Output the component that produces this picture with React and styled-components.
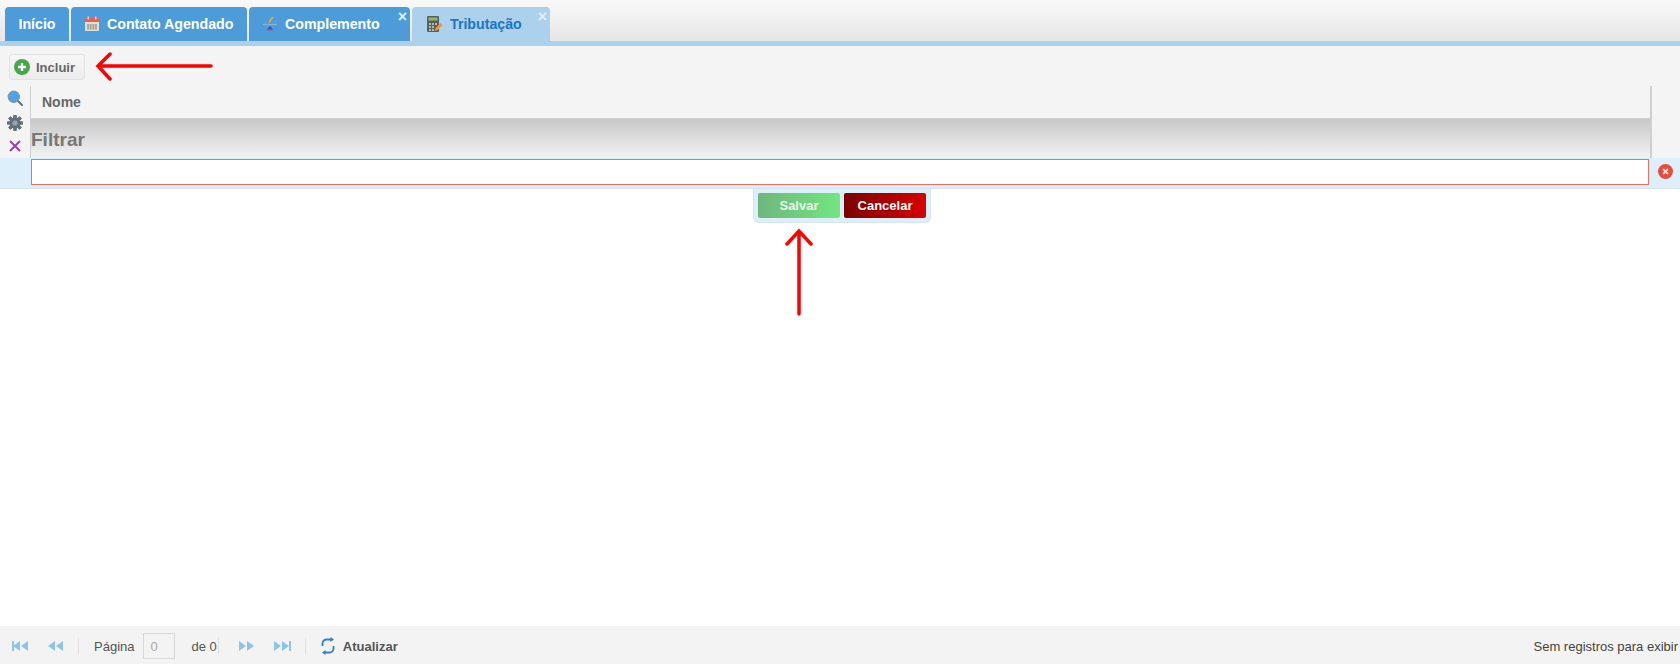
import React from 'react';
import styled, { createGlobalStyle } from "styled-components";

const GlobalStyle = createGlobalStyle`
    html, body {
        margin: 0;
        padding: 0;
        background: #fff;
        font-family: "Liberation Sans", Arial, sans-serif;
    }
`

function CalendarIcon() {
    return (
        <svg width="16" height="16" viewBox="0 0 16 16">
            <rect x="1" y="2" width="14" height="13" rx="1" fill="#e4dfd5" />
            <path d="M1 3a1 1 0 0 1 1-1h12a1 1 0 0 1 1 1v3H1z" fill="#e8604c" />
            <rect x="3.5" y="0.5" width="1.5" height="3" fill="#d4d4d4" />
            <rect x="11" y="0.5" width="1.5" height="3" fill="#d4d4d4" />
            <rect x="3" y="8" width="10" height="5.5" fill="#a9a9a2" />
            <path d="M5.5 8v5.5M8 8v5.5M10.5 8v5.5" stroke="#d8d4cc" strokeWidth="0.7" />
        </svg>
    );
}

function ScaleIcon() {
    return (
        <svg width="16" height="16" viewBox="0 0 16 16">
            <path d="M9 1.5L12 .8 8.5 6 6 7z" fill="#eba341" />
            <path d="M1 8.5h14" stroke="#86b1d8" strokeWidth="1.4" />
            <path d="M8 10l3 3.5H5z" fill="#3e50a8" />
            <rect x="5" y="14" width="6" height="1" fill="#6d7ac0" />
        </svg>
    );
}

function CalcIcon() {
    return (
        <svg width="18" height="18" viewBox="0 0 18 18">
            <rect x="2" y="1" width="12" height="16" rx="1" fill="#5c5f58" />
            <rect x="3.5" y="2.5" width="9" height="3" fill="#7fbf6f" />
            <path d="M4 8h2v2H4zM7 8h2v2H7zM10 8h2v2h-2zM4 11h2v2H4zM7 11h2v2H7zM4 14h2v2H4zM7 14h2v2H7z" fill="#b8b8b0" />
            <path d="M10 16l.6-3 5-5 2 2-5 5z" fill="#ee9a33" />
        </svg>
    );
}

function PlusIcon() {
    return (
        <svg width="16" height="16" viewBox="0 0 16 16">
            <circle cx="8" cy="8" r="8" fill="#43a848" />
            <path d="M8 4v8M4 8h8" stroke="#fff" strokeWidth="2.3" />
        </svg>
    );
}

function SearchIcon() {
    return (
        <svg width="16" height="16" viewBox="0 0 16 16">
            <path d="M10.5 10.5L15 15" stroke="#6b6b6b" strokeWidth="2" strokeLinecap="round" />
            <circle cx="6.8" cy="6.8" r="5.6" fill="#4da3e8" stroke="#7d99ad" strokeWidth="1.2" />
        </svg>
    );
}

function GearIcon() {
    const teeth = [0, 45, 90, 135, 180, 225, 270, 315];
    return (
        <svg width="16" height="16" viewBox="0 0 15 15">
            {teeth.map((deg) => (
                <rect key={deg} x="6" y="0" width="3" height="15" rx="0.6" fill="#63717c" transform={`rotate(${deg} 7.5 7.5)`} />
            ))}
            <circle cx="7.5" cy="7.5" r="5.3" fill="#63717c" />
            <circle cx="7.5" cy="7.5" r="2.4" fill="#9aa5ad" />
        </svg>
    );
}

function CrossIcon() {
    return (
        <svg width="12" height="12" viewBox="0 0 12 12">
            <path d="M1 1l10 10M11 1L1 11" stroke="#9c3fb5" strokeWidth="2" />
        </svg>
    );
}

function ErrorIcon() {
    return (
        <svg width="15" height="15" viewBox="0 0 15 15">
            <circle cx="7.5" cy="7.5" r="7.5" fill="#e84c3d" />
            <path d="M5 5l5 5M10 5l-5 5" stroke="#f6dcd8" strokeWidth="1.8" />
        </svg>
    );
}

function PagerIcon({ dir, end }) {
    const d = dir === "left"
        ? "M8 1v10L1 6zM16 1v10L9 6z"
        : "M0 1v10l7-5zM8 1v10l7-5z";
    return (
        <svg width="17" height="12" viewBox="0 0 17 12">
            <path d={d} fill="#8fc4ea" />
            {end && <rect x={dir === "left" ? 0 : 15} y="1" width="2" height="10" fill="#8fc4ea" />}
        </svg>
    );
}

function RefreshIcon() {
    return (
        <svg width="14" height="18" viewBox="0 0 14 18" fill="none">
            <path d="M1.5 9V6.5a4 4 0 0 1 4-4H10" stroke="#2f7fc8" strokeWidth="1.8" />
            <path d="M9.5 0l3.5 2.5L9.5 5z" fill="#2f7fc8" />
            <path d="M12.5 9v2.5a4 4 0 0 1-4 4H4" stroke="#2f7fc8" strokeWidth="1.8" />
            <path d="M4.5 13L1 15.5 4.5 18z" fill="#2f7fc8" />
        </svg>
    );
}

function App() {
    return (
        <Page>
            <GlobalStyle />
            <TabBar>
                <Tab $width={64} $center><span>Início</span></Tab>
                <Tab $width={176}><CalendarIcon /><span>Contato Agendado</span></Tab>
                <Tab $width={161}><ScaleIcon /><span>Complemento</span><Close>×</Close></Tab>
                <Tab $width={138} $active><CalcIcon /><span>Tributação</span><Close>×</Close></Tab>
            </TabBar>
            <Toolbar>
                <AddButton><PlusIcon />Incluir</AddButton>
            </Toolbar>
            <GridArea>
                <SideTools>
                    <SearchIcon />
                    <GearIcon />
                    <CrossIcon />
                </SideTools>
                <GridMain>
                    <HeaderCell>Nome</HeaderCell>
                    <FilterTitle>Filtrar</FilterTitle>
                </GridMain>
            </GridArea>
            <EditRow>
                <EditInput />
                <ErrorSlot><ErrorIcon /></ErrorSlot>
            </EditRow>
            <ActionsWrap>
                <Actions>
                    <SaveButton>Salvar</SaveButton>
                    <CancelButton>Cancelar</CancelButton>
                </Actions>
            </ActionsWrap>
            <Spacer />
            <Pager>
                <PagerButton $width={35}><PagerIcon dir="left" end /></PagerButton>
                <PagerButton $width={31}><PagerIcon dir="left" /></PagerButton>
                <Divider />
                <PagerText>Página</PagerText>
                <PageInput value="0" readOnly />
                <PagerText>de 0</PagerText>
                <Divider $wide />
                <PagerButton $width={35}><PagerIcon dir="right" /></PagerButton>
                <PagerButton $width={31}><PagerIcon dir="right" end /></PagerButton>
                <Divider />
                <Refresh><RefreshIcon />Atualizar</Refresh>
                <Status>Sem registros para exibir</Status>
            </Pager>
            <ArrowLeft viewBox="0 0 120 30">
                <path d="M117 14H4M16 2L4 14l12 13" fill="none" stroke="#f00" strokeWidth="3.5" strokeLinecap="round" />
            </ArrowLeft>
            <ArrowUp viewBox="0 0 30 90">
                <path d="M15 87V4M3 17L15 4l12 13" fill="none" stroke="#f00" strokeWidth="3.5" strokeLinecap="round" />
            </ArrowUp>
        </Page>
    )
};


const Page = styled.div`
    position: relative;
    display: flex;
    flex-direction: column;
    height: 664px;
    overflow: hidden;
    background: #fff;
`

const TabBar = styled.div`
    display: flex;
    align-items: flex-end;
    gap: 2px;
    height: 41px;
    padding-left: 5px;
    box-sizing: border-box;
    background: linear-gradient(#f9f9f9, #e6e6e6);
`

const Tab = styled.div`
    position: relative;
    display: flex;
    align-items: center;
    justify-content: ${(p) => (p.$center ? "center" : "flex-start")};
    gap: 7px;
    width: ${(p) => p.$width}px;
    height: 34px;
    padding-left: ${(p) => (p.$center ? 0 : 13)}px;
    box-sizing: border-box;
    border-radius: 4px 4px 0 0;
    background: ${(p) => (p.$active ? "#acd1ed" : "#4d9cd9")};
    color: ${(p) => (p.$active ? "#1a76c4" : "#fff")};
    font-size: 14.2px;
    font-weight: 700;
`

const Close = styled.b`
    position: absolute;
    top: 1px;
    right: 3px;
    color: #e4eef6;
    font-size: 16px;
    line-height: 17px;
    font-weight: 700;
`

const Toolbar = styled.div`
    flex: none;
    height: 45px;
    padding: 8px 0 0 9px;
    box-sizing: border-box;
    background: #f4f4f4;
    border-top: 5px solid #acd1ed;
`

const AddButton = styled.div`
    display: flex;
    align-items: center;
    gap: 6px;
    width: 76px;
    height: 26px;
    padding-left: 4px;
    box-sizing: border-box;
    border: 1px solid #e2e2e2;
    border-radius: 3px;
    background: linear-gradient(#f7f7f7, #ececec);
    color: #666;
    font-size: 13px;
    font-weight: 700;
`

const GridArea = styled.div`
    display: flex;
    flex: none;
    height: 72px;
    background: #f4f4f4;
`

const SideTools = styled.div`
    display: flex;
    flex-direction: column;
    align-items: center;
    gap: 9px;
    width: 30px;
    padding: 4px 0 0 0;
    box-sizing: border-box;
`

const GridMain = styled.div`
    width: 1622px;
    box-sizing: border-box;
    border-left: 1px solid #cfcfcf;
    border-right: 2px solid #cfcfcf;
`

const HeaderCell = styled.div`
    display: flex;
    align-items: center;
    height: 33px;
    padding-left: 11px;
    box-sizing: border-box;
    color: #666;
    font-size: 14px;
    font-weight: 700;
    border-bottom: 1px solid #cfcfcf;
`

const FilterTitle = styled.div`
    display: flex;
    align-items: center;
    height: 39px;
    padding-top: 3px;
    box-sizing: border-box;
    background: linear-gradient(#c8c8c8, #f3f3f3);
    color: #777;
    font-size: 19px;
    font-weight: 700;
`

const EditRow = styled.div`
    display: flex;
    flex: none;
    height: 31px;
    padding: 1px 0 0 31px;
    box-sizing: border-box;
    background: #deeffc;
    border-bottom: 1px solid #dbe3ea;
`

const EditInput = styled.div`
    width: 1618px;
    height: 26px;
    box-sizing: border-box;
    background: #fff;
    border: 1px solid #ee6f60;
`

const ErrorSlot = styled.div`
    display: flex;
    justify-content: flex-end;
    flex: 1;
    padding: 5px 7px 0 0;
`

const ActionsWrap = styled.div`
    display: flex;
    flex: none;
    padding-left: 753px;
`

const Actions = styled.div`
    display: flex;
    gap: 4px;
    padding: 4px;
    background: #deeffc;
    border: 1px solid #d3e4f0;
    border-top: 0;
    border-radius: 0 0 6px 6px;
`

const SaveButton = styled.div`
    display: flex;
    align-items: center;
    justify-content: center;
    width: 82px;
    height: 25px;
    border-radius: 2px;
    background: linear-gradient(90deg, #6fb67e, #72e680);
    color: #e9f7ea;
    font-size: 13px;
    font-weight: 700;
`

const CancelButton = styled.div`
    display: flex;
    align-items: center;
    justify-content: center;
    width: 82px;
    height: 25px;
    border-radius: 2px;
    background: linear-gradient(90deg, #7a0000, #d80000);
    color: #fff;
    font-size: 13px;
    font-weight: 700;
`

const Spacer = styled.div`
    flex: 1;
`

const Pager = styled.div`
    display: flex;
    align-items: center;
    flex: none;
    height: 38px;
    padding: 2px 2px 0 12px;
    box-sizing: border-box;
    background: #f3f3f3;
    color: #555;
    font-size: 13px;
`

const PagerButton = styled.div`
    display: flex;
    align-items: center;
    width: ${(p) => p.$width}px;
`

const Divider = styled.div`
    width: 1px;
    height: 16px;
    margin: 0 ${(p) => (p.$wide ? 20 : 15)}px 0 ${(p) => (p.$wide ? 1 : 0)}px;
    background: #e0e0e0;
`

const PagerText = styled.span`
    white-space: nowrap;
`

const PageInput = styled.input`
    width: 32px;
    height: 26px;
    margin: 0 16px 0 9px;
    padding: 0 6px;
    box-sizing: border-box;
    border: 1px solid #d8d8d8;
    background: #f3f3f3;
    color: #aaa;
    font: 13px "Liberation Sans", Arial, sans-serif;
`

const Refresh = styled.div`
    display: flex;
    align-items: center;
    gap: 8px;
    color: #555;
    font-size: 13px;
    font-weight: 700;
`

const Status = styled.span`
    margin-left: auto;
    color: #444;
    font-size: 13px;
`

const ArrowLeft = styled.svg`
    position: absolute;
    left: 94px;
    top: 52px;
    width: 120px;
    height: 30px;
`

const ArrowUp = styled.svg`
    position: absolute;
    left: 784px;
    top: 227px;
    width: 30px;
    height: 90px;
`


export default App
